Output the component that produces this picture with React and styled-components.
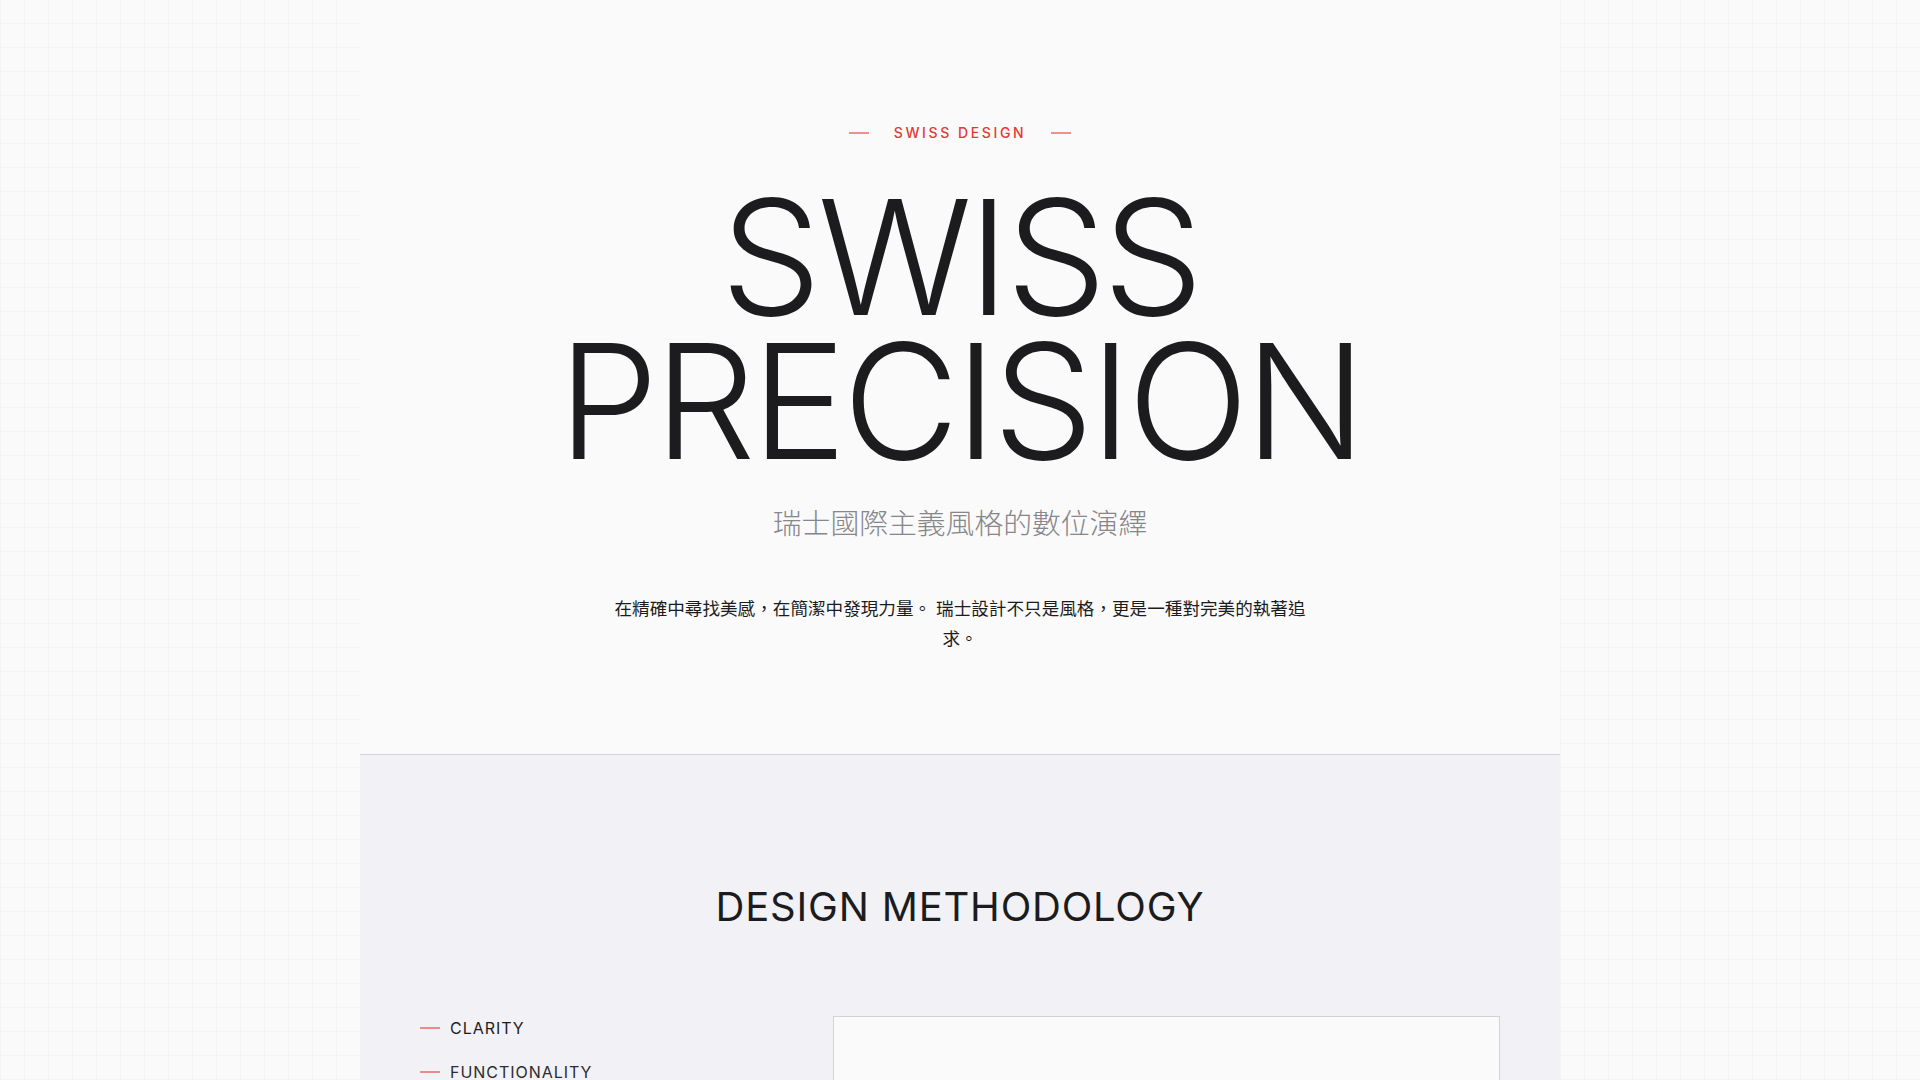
import React from 'react'
import styled, { createGlobalStyle } from 'styled-components'

const GlobalStyle = createGlobalStyle`
    * { box-sizing: border-box; }
    html, body {
        margin: 0;
        padding: 0;
    }
    body {
        font-family: Inter, "Noto Sans", "Noto Sans CJK TC", sans-serif;
        color: #1c1c1e;
        background-color: #fafafa;
        background-image:
            linear-gradient(rgba(0, 0, 0, 0.022) 1px, transparent 1px),
            linear-gradient(90deg, rgba(0, 0, 0, 0.022) 1px, transparent 1px);
        background-size: 24px 24px;
        background-position: 0 -1px, 0 0;
    }
`;

//页面容器
const Page = styled.main`
    width: 1200px;
    margin: 0 auto;
    background: #fafafa;
    min-height: 1080px;
`;

//首屏
const Hero = styled.header`
    display: flex;
    flex-direction: column;
    align-items: center;
    padding: 123px 0 100px;
    text-align: center;
`;

const Eyebrow = styled.div`
    display: flex;
    align-items: center;
    gap: 25px;
    font-size: 14px;
    line-height: 20px;
    font-weight: 500;
    letter-spacing: 0.185em;
    color: #e53935;

    &::before,
    &::after {
        content: "";
        width: 20px;
        height: 2px;
        background: rgba(229, 57, 53, 0.55);
    }
`;

const Title = styled.h1`
    margin: 42px 0 0;
    font-size: 160px;
    line-height: 0.9;
    font-weight: 300;
    letter-spacing: -0.026em;
    color: #1c1c1e;
`;

const Subtitle = styled.p`
    margin: 31px 0 0;
    font-family: Inter, "Noto Sans CJK TC", sans-serif;
    font-size: 28.8px;
    line-height: 40px;
    font-weight: 300;
    color: #86868b;
`;

const Lead = styled.p`
    margin: 50px 0 0;
    max-width: 700px;
    font-family: Inter, "Noto Sans CJK TC", sans-serif;
    font-size: 17.6px;
    line-height: 1.7;
    color: #1c1c1e;
`;

//方法论区块
const Method = styled.section`
    border-top: 1px solid #d2d2d7;
    background: #f2f2f6;
    padding: 128px 60px 120px;
`;

const SectionTitle = styled.h2`
    margin: 0 0 85px;
    text-align: center;
    font-size: 40px;
    line-height: 48px;
    font-weight: 400;
    letter-spacing: 0.02em;
    color: #1c1c1e;
`;

const Columns = styled.div`
    display: grid;
    grid-template-columns: 1fr 2fr;
    gap: 80px;
`;

const NavList = styled.ul`
    list-style: none;
    margin: 0;
    padding: 0;
    display: flex;
    flex-direction: column;
    gap: 20px;
`;

const NavItem = styled.li`
    display: flex;
    align-items: center;
    gap: 10px;
    font-size: 16px;
    line-height: 24px;
    font-weight: 400;
    letter-spacing: 0.06em;
    color: ${p => (p.$active ? '#1c1c1e' : '#2c2c2e')};

    &::before {
        content: "";
        width: 20px;
        height: 2px;
        background: rgba(229, 57, 53, 0.55);
    }
`;

const Panel = styled.div`
    min-height: 420px;
    background: #fafafa;
    border: 1px solid #d2d2d7;
`;

const principles = ['CLARITY', 'FUNCTIONALITY', 'OBJECTIVITY', 'ORDER']

export default function App() {
    return (
        <>
            <GlobalStyle />
            <Page>
                <Hero>
                    <Eyebrow>SWISS DESIGN</Eyebrow>
                    <Title>SWISS<br />PRECISION</Title>
                    <Subtitle>瑞士國際主義風格的數位演繹</Subtitle>
                    <Lead>
                        在精確中尋找美感，在簡潔中發現力量。 瑞士設計不只是風格，更是一種對完美的執著追求。
                    </Lead>
                </Hero>
                <Method>
                    <SectionTitle>DESIGN METHODOLOGY</SectionTitle>
                    <Columns>
                        <NavList>
                            {principles.map((item, i) => (
                                <NavItem key={item} $active={i === 0}>{item}</NavItem>
                            ))}
                        </NavList>
                        <Panel />
                    </Columns>
                </Method>
            </Page>
        </>
    )
}
